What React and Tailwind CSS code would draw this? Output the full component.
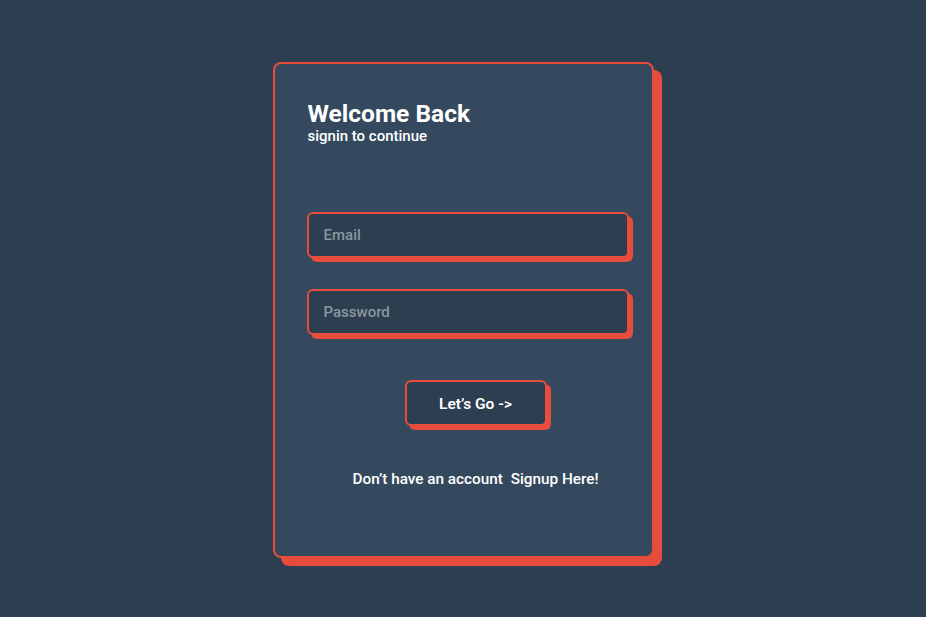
import React from "react";

const App = () => {
  return (
    <div
      className="min-h-screen w-full bg-[#2c3e50] flex items-start justify-center pt-[62px]"
      style={{ fontFamily: "Roboto, 'Liberation Sans', sans-serif" }}
    >
      <div className="w-[381px] h-[496px] bg-[#34495e] border-2 border-[#e74c3c] rounded-lg shadow-[8px_8px_0_#e74c3c] pt-[36px] pl-[33px] pr-[8px] flex flex-col">
        <h1 className="text-white text-[24.5px] leading-[28px] font-bold">Welcome Back</h1>
        <p className="text-white text-[15px] leading-[18px] font-medium mt-[-1px]">signin to continue</p>

        <form className="flex flex-col mt-[67px]" onSubmit={(e) => e.preventDefault()}>
          <input
            type="email"
            placeholder="Email"
            className="w-[322px] h-[46px] -ml-px bg-[#2c3e50] border-2 border-[#e74c3c] rounded-md shadow-[4px_4px_0_#e74c3c] px-[15px] text-[15px] font-medium text-white placeholder:text-[#8a969f] outline-none"
          />
          <input
            type="password"
            placeholder="Password"
            className="w-[322px] h-[46px] -ml-px mt-[31px] bg-[#2c3e50] border-2 border-[#e74c3c] rounded-md shadow-[4px_4px_0_#e74c3c] px-[15px] text-[15px] font-medium text-white placeholder:text-[#8a969f] outline-none"
          />
          <div className="flex justify-center mt-[45px]">
            <button className="w-[142px] h-[46px] pt-[3px] bg-[#2c3e50] border-2 border-[#e74c3c] rounded-md shadow-[4px_4px_0_#e74c3c] text-white text-[15.5px] font-semibold">
              Let’s Go -&gt;
            </button>
          </div>
        </form>

        <p className="text-white text-[15.3px] font-medium leading-[20px] text-center mt-[43px]">
          Don’t have an account <a className="ml-1">Signup Here!</a>
        </p>
      </div>
    </div>
  );
};

export default App;
